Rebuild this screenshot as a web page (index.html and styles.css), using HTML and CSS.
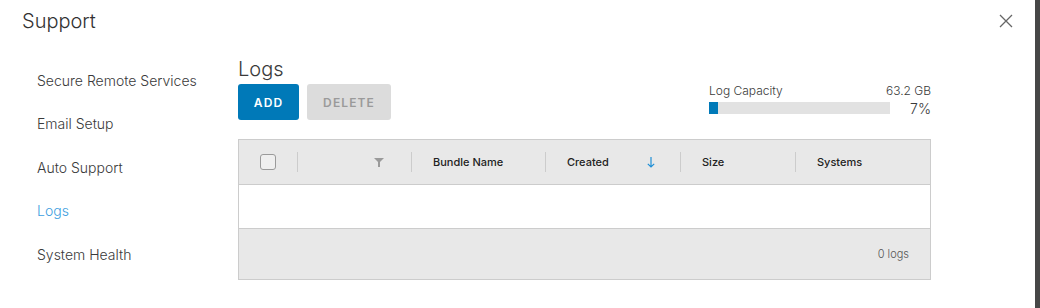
FILE: index.html
```html
<!DOCTYPE html>
<html>
<head>
<meta charset="utf-8">
<link rel="stylesheet" href="styles.css">
</head>
<body>
<div class="page">
  <div class="modal">
    <div class="modal-header">
      <h1 class="modal-title">Support</h1>
      <button class="close" aria-label="Close">
        <svg width="14" height="14" viewBox="0 0 14 14"><path d="M1 1L13 13M13 1L1 13" stroke="#666" stroke-width="1.3" fill="none"/></svg>
      </button>
    </div>
    <div class="modal-body">
      <nav class="nav">
        <a class="nav-item">Secure Remote Services</a>
        <a class="nav-item">Email Setup</a>
        <a class="nav-item">Auto Support</a>
        <a class="nav-item active">Logs</a>
        <a class="nav-item">System Health</a>
      </nav>
      <section class="content">
        <div class="toolbar">
          <div class="toolbar-left">
            <h2 class="section-title">Logs</h2>
            <div class="buttons">
              <button class="btn btn-primary">ADD</button>
              <button class="btn btn-disabled">DELETE</button>
            </div>
          </div>
          <div class="capacity">
            <div class="cap-row">
              <span>Log Capacity</span>
              <span>63.2 GB</span>
            </div>
            <div class="cap-row cap-bar-row">
              <div class="bar"><div class="bar-fill" style="width:5%"></div></div>
              <span class="pct">7%</span>
            </div>
          </div>
        </div>
        <div class="grid">
          <div class="grid-head">
            <div class="col col-check"><span class="checkbox"></span></div>
            <div class="col col-filter">
              <svg width="10" height="9" viewBox="0 0 10 9"><path d="M0 0H10L6 4V9H4V4Z" fill="#9a9a9a"/></svg>
            </div>
            <div class="col col-name">Bundle Name</div>
            <div class="col col-created">Created
              <svg class="sort" width="8" height="11" viewBox="0 0 8 11"><path d="M4 0V10M0.8 6.8L4 10L7.2 6.8" stroke="#1f8fd6" stroke-width="1.2" fill="none"/></svg>
            </div>
            <div class="col col-size">Size</div>
            <div class="col col-systems">Systems</div>
          </div>
          <div class="grid-body"></div>
          <div class="grid-foot">0 logs</div>
        </div>
      </section>
    </div>
  </div>
  <div class="backdrop-strip"></div>
</div>
</body>
</html>
```

FILE: styles.css
```css
* { box-sizing: border-box; }
html, body { margin: 0; padding: 0; }
body {
  font-family: "Inter", "Noto Sans", sans-serif;
  color: #565656;
  background: #fff;
}
.page {
  display: flex;
  width: 1040px;
  height: 308px;
  overflow: hidden;
}
.modal {
  width: 1035px;
  height: 308px;
  background: #fff;
  padding: 8px 22px 0 22px;
}
.backdrop-strip {
  width: 5px;
  height: 308px;
  background: #474747;
}
.modal-header {
  display: flex;
  justify-content: space-between;
  align-items: flex-start;
  height: 46px;
}
.modal-title {
  margin: 0;
  font-size: 20px;
  font-weight: 300;
  line-height: 26px;
  color: #313131;
}
.close {
  border: 0;
  background: none;
  padding: 0;
  margin: 6px 0 0 0;
  width: 14px;
  height: 14px;
  display: flex;
}
.modal-body {
  display: flex;
}
.nav {
  width: 216px;
  display: flex;
  flex-direction: column;
  padding: 17px 0 0 15px;
}
.nav-item {
  font-size: 14px;
  font-weight: 300;
  line-height: 20px;
  height: 43.4px;
  color: #3a3a3a;
}
.nav-item.active { color: #3c9ee0; }
.content {
  width: 693px;
  display: flex;
  flex-direction: column;
}
.toolbar {
  display: flex;
  justify-content: space-between;
  height: 85px;
}
.section-title {
  margin: 0;
  font-size: 20px;
  font-weight: 300;
  line-height: 30px;
  color: #3a3a3a;
}
.buttons {
  display: flex;
  gap: 8px;
}
.btn {
  height: 36px;
  border: 0;
  border-radius: 3px;
  font-family: inherit;
  font-size: 12px;
  font-weight: 600;
  letter-spacing: 1.1px;
  padding: 0;
}
.btn-primary {
  width: 61px;
  background: #0079b8;
  color: #fff;
}
.btn-disabled {
  width: 84px;
  background: #dcdcdc;
  color: #9a9a9a;
}
.capacity {
  width: 222px;
  padding-top: 29px;
  font-size: 12px;
  font-weight: 300;
  color: #3a3a3a;
}
.cap-row {
  display: flex;
  justify-content: space-between;
  align-items: center;
  height: 14px;
}
.cap-bar-row {
  margin-top: 5px;
  height: 12px;
}
.bar {
  width: 181px;
  height: 12px;
  background: #e2e2e2;
}
.bar-fill {
  height: 100%;
  background: #0079b8;
}
.pct { font-size: 14px; }
.grid {
  border: 1px solid #cccccc;
  height: 141px;
  display: flex;
  flex-direction: column;
}
.grid-head {
  height: 45px;
  background: #e8e8e8;
  border-bottom: 1px solid #cccccc;
  display: flex;
  align-items: center;
  font-size: 11px;
  font-weight: 500;
  color: #222;
}
.col {
  height: 20px;
  display: flex;
  align-items: center;
  border-left: 1px solid #cccccc;
  padding-left: 21px;
}
.col-check {
  border-left: 0;
  width: 58px;
  padding-left: 21px;
}
.checkbox {
  width: 16px;
  height: 16px;
  border: 1px solid #9a9a9a;
  border-radius: 3px;
  background: #efefef;
}
.col-filter {
  width: 114px;
  justify-content: flex-end;
  padding-right: 27px;
}
.col-name { width: 134px; }
.col-created { width: 135px; justify-content: space-between; padding-right: 25px; }
.col-size { width: 115px; }
.col-systems { flex: 1; }
.grid-body {
  height: 44px;
  background: #fff;
  border-bottom: 1px solid #cccccc;
}
.grid-foot {
  flex: 1;
  background: #e8e8e8;
  display: flex;
  align-items: center;
  justify-content: flex-end;
  padding-right: 21px;
  font-size: 11px;
  font-weight: 300;
  color: #565656;
}
```
